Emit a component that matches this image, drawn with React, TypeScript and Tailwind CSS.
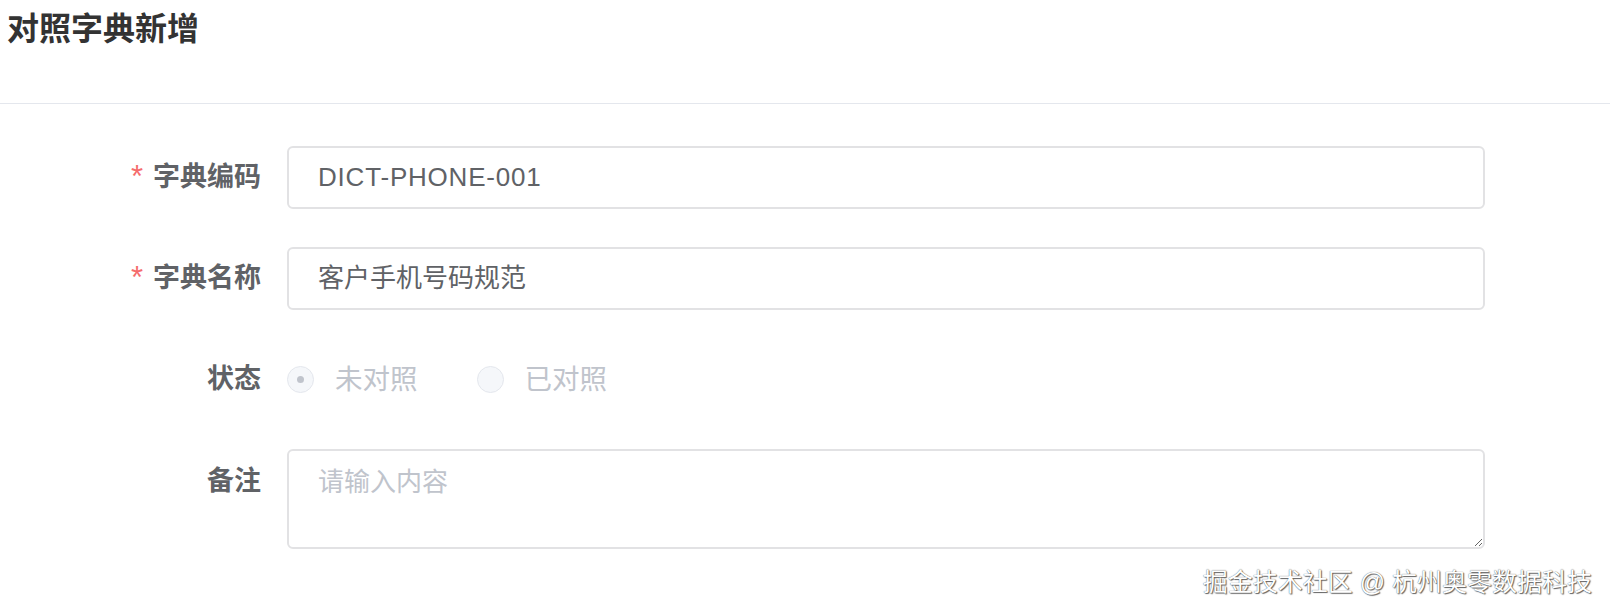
import React from "react";

const font = "font-['Liberation_Sans','Noto_Sans_CJK_SC',sans-serif]";

function Label({ text, required }: { text: string; required?: boolean }) {
  return (
    <div className="flex h-[63px] items-center justify-end pr-[26px] text-[27px] font-semibold text-[#606266]">
      {required && <span className="mr-[10px] text-[31px] font-normal text-[#f56c6c]">*</span>}
      <span>{text}</span>
    </div>
  );
}

function Radio({ label, checked }: { label: string; checked?: boolean }) {
  return (
    <label className="flex items-center">
      <span className="flex h-[27px] w-[27px] items-center justify-center rounded-full border-[1.5px] border-[#e4e7ed] bg-[#f5f7fa]">
        {checked && <span className="h-[7px] w-[7px] rounded-full bg-[#c0c4cc]" />}
      </span>
      <span className="ml-[21px] text-[27.5px] text-[#c0c4cc]">{label}</span>
    </label>
  );
}

export default function App() {
  return (
    <div className={`relative h-[614px] w-full overflow-hidden bg-white ${font}`}>
      <div className="flex h-[104px] items-start border-b-[1.5px] border-[#e4e7ed] pl-[7px] pt-[9px]">
        <h1 className="text-[32px] font-semibold leading-[40px] text-[#333333]">对照字典新增</h1>
      </div>
      <div className="grid grid-cols-[287px_1fr] gap-y-[38px] pr-[125px] pt-[42px]">
        <Label text="字典编码" required />
        <div className="flex h-[63px] items-center rounded-[6px] border-2 border-[#e2e2e4] px-[29px] text-[26px] tracking-[0.8px] text-[#606266]">
          DICT-PHONE-001
        </div>
        <Label text="字典名称" required />
        <div className="flex h-[63px] items-center rounded-[6px] border-2 border-[#e2e2e4] px-[29px] text-[26px] text-[#606266]">
          客户手机号码规范
        </div>
        <Label text="状态" />
        <div className="flex h-[63px] items-center gap-[59px]">
          <Radio label="未对照" checked />
          <Radio label="已对照" />
        </div>
        <div className="flex h-[63px] items-start justify-end pr-[26px] pt-[12px] text-[27px] font-semibold text-[#606266]">
          备注
        </div>
        <textarea
          className={`block h-[100px] w-full resize-y rounded-[6px] border-2 border-[#e2e2e4] px-[29px] py-[12px] text-[26px] leading-[39px] text-[#606266] outline-none placeholder:text-[#c0c4cc] ${font}`}
          placeholder="请输入内容"
        />
      </div>
      <div className="absolute right-[18px] top-[567px] text-[25px] leading-[31px] text-white [text-shadow:0_0_1px_#444,1px_1px_1px_#666]">
        掘金技术社区 @ 杭州奥零数据科技
      </div>
    </div>
  );
}
